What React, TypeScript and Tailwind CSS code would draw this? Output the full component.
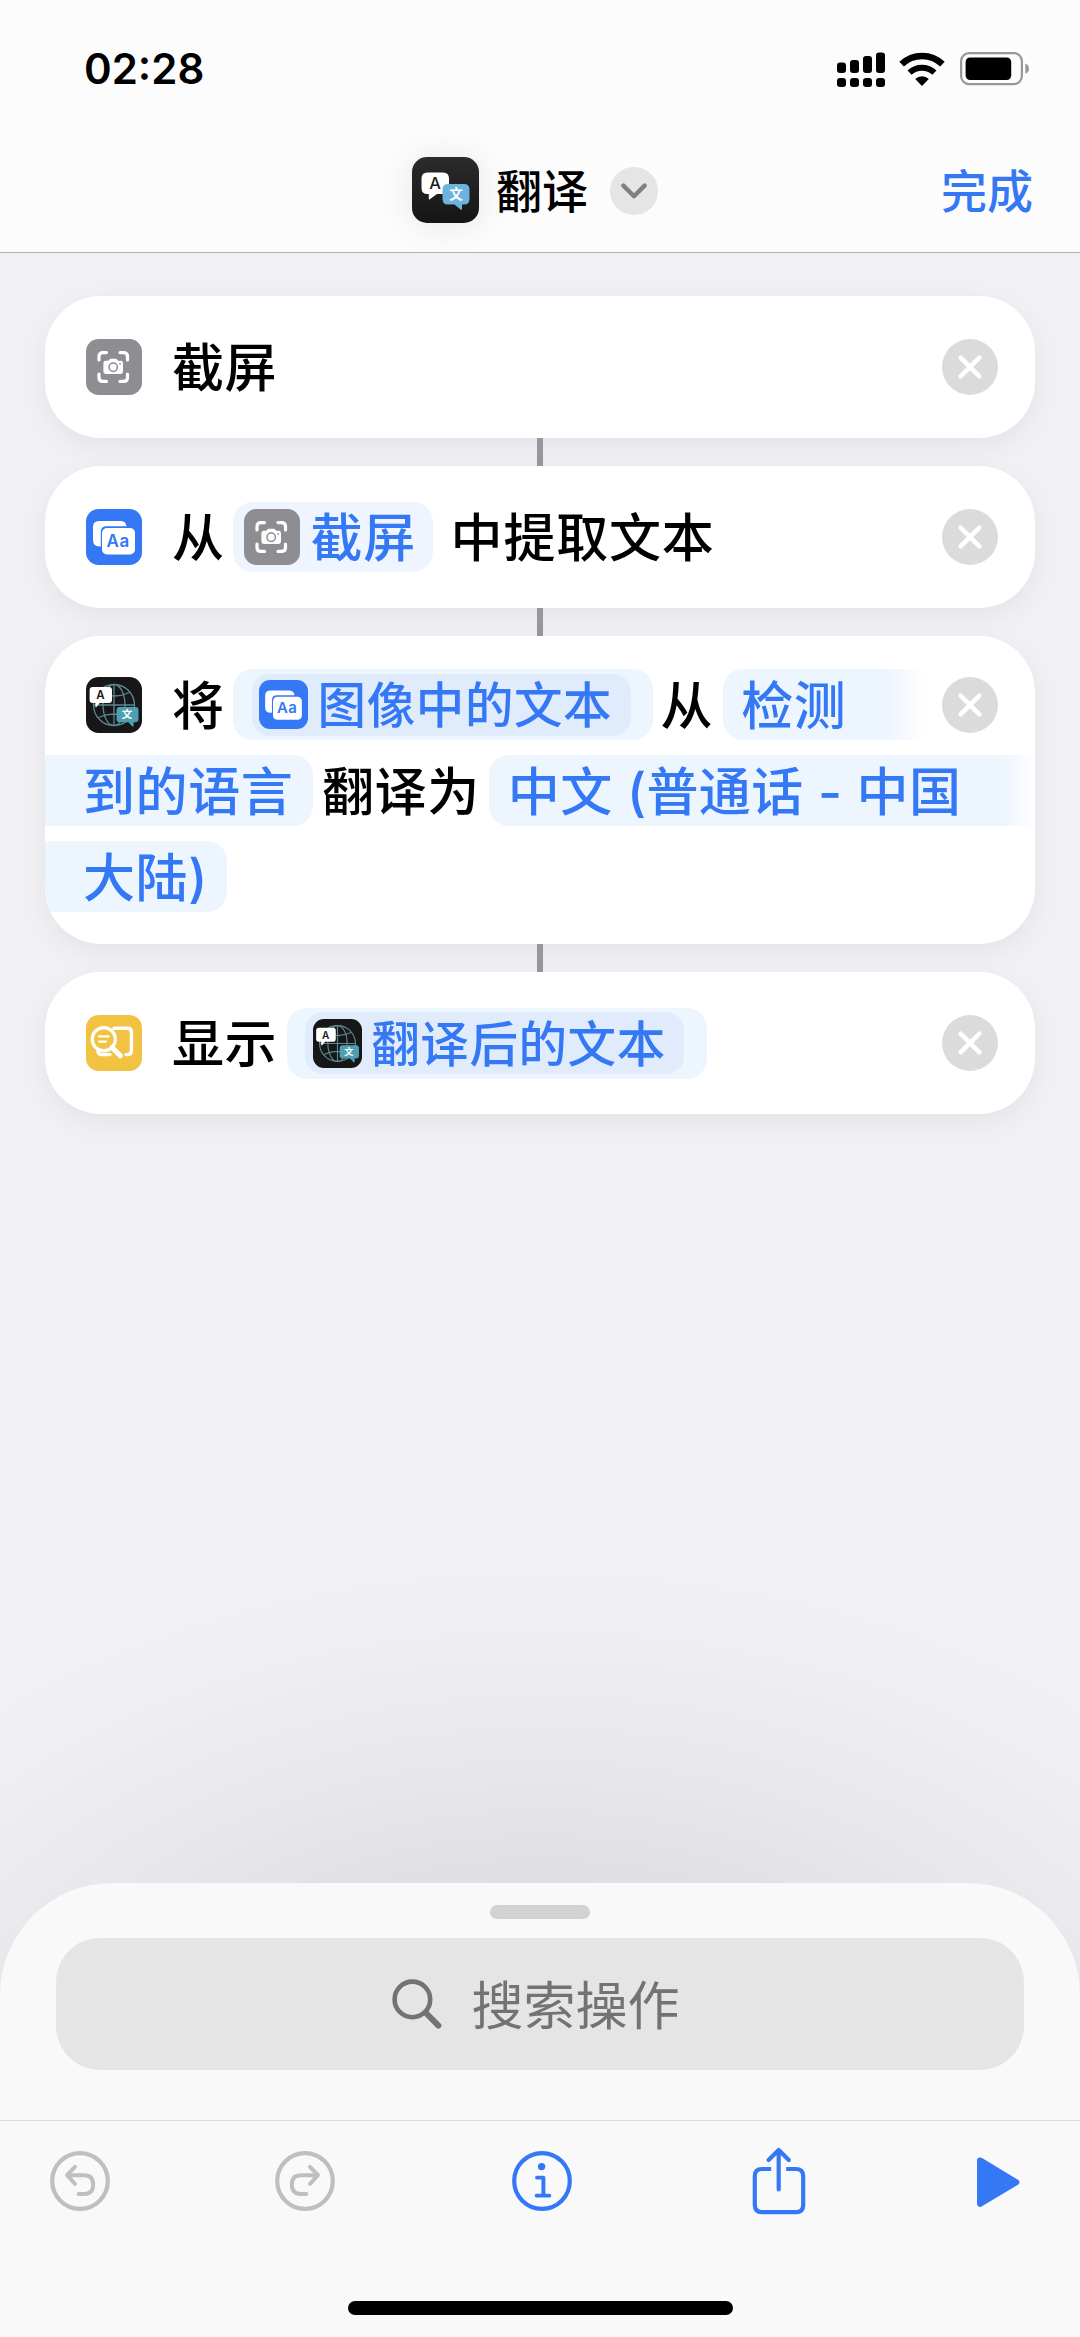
import type { ReactNode } from "react";

type IconProps = { className?: string };

const SignalIcon = () => (
  <svg className="h-[36px] w-[48px]" viewBox="0 0 48 36" fill="#000">
    <rect x="0" y="11.5" width="9" height="10.5" rx="3" />
    <rect x="13" y="9" width="9" height="13" rx="3" />
    <rect x="26" y="5" width="9" height="17" rx="3" />
    <rect x="39" y="1.5" width="9" height="20.5" rx="3" />
    <rect x="0" y="27" width="9" height="9" rx="3" />
    <rect x="13" y="27" width="9" height="9" rx="3" />
    <rect x="26" y="27" width="9" height="9" rx="3" />
    <rect x="39" y="27" width="9" height="9" rx="3" />
  </svg>
);

const WifiIcon = () => (
  <svg className="h-[34px] w-[46px]" viewBox="0 0 46 34" fill="none" stroke="#000">
    <path d="M2.6 12.2 A29.5 29.5 0 0 1 43.4 12.2" strokeWidth="6.6" />
    <path d="M10.6 20.7 A18 18 0 0 1 35.4 20.7" strokeWidth="6" />
    <path d="M23 34 L16.2 27 A9.6 9.6 0 0 1 29.8 27 Z" fill="#000" stroke="none" />
  </svg>
);

const BatteryIcon = () => (
  <svg className="h-[34px] w-[70px]" viewBox="0 0 70 34" fill="none">
    <rect x="1.1" y="1.1" width="60.8" height="31" rx="8" stroke="#97979a" strokeWidth="2.2" />
    <rect x="5.6" y="5.4" width="45.6" height="22.6" rx="4.5" fill="#000" />
    <path d="M65.3 11.6 C70.2 13 70.2 20.4 65.3 21.8 Z" fill="#97979a" />
  </svg>
);

const TranslateAppIcon = () => (
  <svg className="h-[66px] w-[67px] rounded-[15px] shadow-[0_2px_36px_rgba(0,0,0,0.09)]" viewBox="0 0 67 66">
    <defs>
      <linearGradient id="appBg" x1="0" y1="0" x2="0" y2="1">
        <stop offset="0" stopColor="#2b2b2b" />
        <stop offset="1" stopColor="#151515" />
      </linearGradient>
    </defs>
    <rect width="67" height="66" fill="url(#appBg)" />
    <path d="M15.5 15.5 H31 Q37 15.5 37 21.5 V31 Q37 37 31 37 H25 L17.5 42.5 Q16.8 42.6 16.8 41.8 V37 H15.5 Q9.5 37 9.5 31 V21.5 Q9.5 15.5 15.5 15.5 Z" fill="#fff" />
    <path d="M36 27 H52 Q57.5 27 57.5 32.5 V42 Q57.5 47.5 52 47.5 H50 V52.4 Q49.5 53.2 48.6 52.6 L42.5 47.5 H36 Q30.5 47.5 30.5 42 V32.5 Q30.5 27 36 27 Z" fill="#6ab4dd" />
    <text x="23" y="32.3" textAnchor="middle" fontSize="16.5" fontWeight="500" fill="#1c1c1c" fontFamily="Inter">A</text>
    <text x="44" y="42.4" textAnchor="middle" fontSize="13.5" fontWeight="700" fill="#fff" fontFamily="Noto Sans CJK SC">文</text>
  </svg>
);

const ScreenshotIcon = ({ className }: IconProps) => (
  <svg className={className} viewBox="0 0 56 56" fill="none">
    <rect width="56" height="56" rx="12.5" fill="#8e8d92" />
    <g stroke="#fff" strokeWidth="3.2" strokeLinecap="round">
      <path d="M13 21 V17.5 Q13 13.6 17 13.6 H20.5" />
      <path d="M34 13.6 H37.5 Q41.5 13.6 41.5 17.5 V21" />
      <path d="M41.5 35 V38.5 Q41.5 42.4 37.5 42.4 H34" />
      <path d="M20.5 42.4 H17 Q13 42.4 13 38.5 V35" />
    </g>
    <path d="M19.8 21.8 H22.4 L23.6 20.2 Q24 19.8 24.8 19.8 H29.8 Q30.6 19.8 31 20.2 L32.2 21.8 H34.6 Q37 21.8 37 24.2 V32.6 Q37 35 34.6 35 H19.8 Q17.4 35 17.4 32.6 V24.2 Q17.4 21.8 19.8 21.8 Z" fill="#fff" />
    <circle cx="27.2" cy="28.2" r="4.2" stroke="#8e8d92" strokeWidth="1.5" />
    <circle cx="34" cy="24.8" r="0.9" fill="#8e8d92" />
  </svg>
);

const ExtractTextIcon = ({ className }: IconProps) => (
  <svg className={className} viewBox="0 0 56 56">
    <rect width="56" height="56" rx="12.5" fill="#3478f6" />
    <path d="M13 12 H34 Q40 12 40.5 17.3 H20.5 Q14.8 17.3 14.8 23 V37.5 H13.5 Q7 37.5 7 31 V18 Q7 12 13 12 Z" fill="#fff" />
    <rect x="16" y="19" width="33" height="26.5" rx="5" fill="#fff" />
    <text x="32.2" y="38" textAnchor="middle" fontSize="17" fontWeight="600" fill="#3478f6" fontFamily="Inter">Aa</text>
  </svg>
);

const TranslateTextIcon = ({ className }: IconProps) => (
  <svg className={className} viewBox="0 0 56 56" fill="none">
    <rect width="56" height="56" rx="12.5" fill="#171717" />
    <g stroke="#5c8791" strokeWidth="1.3">
      <circle cx="28" cy="28" r="20.5" />
      <ellipse cx="28" cy="28" rx="11" ry="20.5" />
      <path d="M28 7.5 V48.5 M7.5 28 H48.5 M12.5 15.5 Q28 22.5 43.5 15.5 M12.5 40.5 Q28 33.5 43.5 40.5" />
    </g>
    <path d="M6.8 10 H22.8 Q26 10 26 13.2 V22.8 Q26 26 22.8 26 H13.8 L10.4 30 Q9.4 30.6 9.4 29.4 V26 H6.8 Q3.6 26 3.6 22.8 V13.2 Q3.6 10 6.8 10 Z" fill="#fff" />
    <path d="M33.7 30 H49.3 Q52.5 30 52.5 33.2 V42 Q52.5 45.2 49.3 45.2 H47.6 V49 Q47 50 46 49.2 L42.4 45.2 H33.7 Q30.5 45.2 30.5 42 V33.2 Q30.5 30 33.7 30 Z" fill="#4f9fb3" />
    <text x="14.8" y="22.4" textAnchor="middle" fontSize="11.5" fontWeight="600" fill="#171717" fontFamily="Inter">A</text>
    <text x="41.3" y="41.4" textAnchor="middle" fontSize="10.5" fontWeight="700" fill="#fff" fontFamily="Noto Sans CJK SC">文</text>
  </svg>
);

const ShowResultIcon = ({ className }: IconProps) => (
  <svg className={className} viewBox="0 0 56 56" fill="none" stroke="#fff" strokeLinecap="round">
    <rect width="56" height="56" rx="12.5" fill="#f2c343" stroke="none" />
    <path d="M28 13.2 H41.5 Q45.4 13.2 45.4 17.2 V35.8 Q45.4 39.6 41.5 39.6 H40" strokeWidth="3.4" />
    <path d="M24 39.6 H16 Q12 39.6 12 36" strokeWidth="3.4" />
    <circle cx="17.8" cy="24.2" r="11.6" strokeWidth="3.2" />
    <path d="M13 21.4 H22.6 M13 26.6 H19.8" strokeWidth="2.2" />
    <path d="M26 32.4 L34.4 40.8" strokeWidth="5" />
  </svg>
);

const DeleteButton = () => (
  <button className="h-14 w-14 shrink-0">
    <svg className="h-full w-full" viewBox="0 0 56 56">
      <circle cx="28" cy="28" r="28" fill="#dbdbdb" />
      <path d="M18.6 18.6 L37.4 37.4 M37.4 18.6 L18.6 37.4" stroke="#fff" strokeWidth="4.4" strokeLinecap="round" />
    </svg>
  </button>
);

const Card = ({ children }: { children: ReactNode }) => (
  <div className="w-full overflow-hidden rounded-[56px] bg-white shadow-[0_8px_28px_rgba(0,0,0,0.055)]">{children}</div>
);

const Connector = () => <div className="h-7 w-1.5 bg-[#97989e]" />;

const Toolbar = () => (
  <div className="flex h-[120px] items-center pl-[50px]">
    <svg className="h-[60px] w-[60px]" viewBox="0 0 60 60" fill="none" stroke="#bfbfbf" strokeWidth="4.2" strokeLinecap="round" strokeLinejoin="round">
      <circle cx="30" cy="30" r="27.8" />
      <path d="M25 15.8 L17 24.2 L25 32.8 M17.6 24.2 H34 Q43.2 24.2 43.2 33.6 Q43.2 43 34 43 H28.6" strokeWidth="3.9" />
    </svg>
    <svg className="ml-[165px] h-[60px] w-[60px]" viewBox="0 0 60 60" fill="none" stroke="#bfbfbf" strokeWidth="4.2" strokeLinecap="round" strokeLinejoin="round">
      <circle cx="30" cy="30" r="27.8" />
      <path d="M35 15.8 L43 24.2 L35 32.8 M42.4 24.2 H26 Q16.8 24.2 16.8 33.6 Q16.8 43 26 43 H31.4" strokeWidth="3.9" />
    </svg>
    <svg className="ml-[177px] h-[60px] w-[60px]" viewBox="0 0 60 60" fill="none" stroke="#3478f6" strokeWidth="4.2" strokeLinecap="round" strokeLinejoin="round">
      <circle cx="30" cy="30" r="27.8" />
      <circle cx="29.6" cy="15.6" r="3.7" fill="#3478f6" stroke="none" />
      <path d="M25 26.6 H31.4 V44.6 M24.6 44.6 H37.4" strokeWidth="3.9" />
    </svg>
    <svg className="ml-[180px] h-[68px] w-[54px]" viewBox="0 0 54 68" fill="none" stroke="#3478f6" strokeWidth="4.2" strokeLinecap="round" strokeLinejoin="round">
      <path d="M19.2 22 H10 Q2.8 22 2.8 29 V58 Q2.8 65.2 10 65.2 H44 Q51.2 65.2 51.2 58 V29 Q51.2 22 44 22 H34.2" strokeLinecap="butt" />
      <path d="M26.7 3.4 V42.4 M16.6 13 L26.7 3 L36.8 13" />
    </svg>
    <svg className="ml-[170px] mt-[2px] h-[52px] w-[44px]" viewBox="0 0 44 52">
      <path d="M4 4.4 L40.4 26.2 L4 47.8 Z" fill="#3478f6" stroke="#3478f6" strokeWidth="6" strokeLinejoin="round" />
    </svg>
  </div>
);

export default function App() {
  return (
    <div
      lang="zh-CN"
      className="flex h-[2337px] w-[1080px] flex-col overflow-hidden bg-[#f0f0f5] bg-[radial-gradient(ellipse_900px_640px_at_540px_2180px,rgba(0,0,0,0.08)_40%,rgba(0,0,0,0.07)_48%,rgba(0,0,0,0.042)_62%,rgba(0,0,0,0.018)_78%,rgba(0,0,0,0.005)_90%,transparent_100%)] font-['Inter','Noto_Sans_CJK_SC',sans-serif] text-black"
    >
      <header className="h-[253px] shrink-0 border-b border-[#b4b3b8] bg-[#fcfcfd]">
        <div className="flex h-[138px] items-center justify-between pl-[84px] pr-[50px]">
          <span className="text-[42px] font-semibold leading-none">02:28</span>
          <div className="flex items-center">
            <SignalIcon />
            <span className="w-[14px]" />
            <WifiIcon />
            <span className="w-[15px]" />
            <BatteryIcon />
          </div>
        </div>
        <div className="flex h-[104px] items-center pl-[412px] pr-[47px]">
          <TranslateAppIcon />
          <h1 className="ml-[17px] pt-px text-[46px] font-medium leading-none">翻译</h1>
          <button className="ml-[22px] mt-[2px] flex h-12 w-12 items-center justify-center rounded-full bg-[#e5e5e6]">
            <svg className="h-4 w-[26px]" viewBox="0 0 26 16" fill="none">
              <path d="M2.4 2.6 L13 13.2 L23.6 2.6" stroke="#808083" strokeWidth="4.4" strokeLinecap="round" strokeLinejoin="round" />
            </svg>
          </button>
          <button className="ml-auto pt-px text-[46px] font-medium leading-none text-[#3478f6]">完成</button>
        </div>
      </header>

      <main className="flex flex-1 flex-col items-center px-[45px] pt-[43px] text-[52px] font-medium leading-none tracking-[0.6px]">
        <Card>
          <div className="flex h-[142px] items-center pl-[41px] pr-[37px]">
            <ScreenshotIcon className="h-14 w-14" />
            <span className="ml-[30px] pt-1">截屏</span>
            <span className="flex-1" />
            <DeleteButton />
          </div>
        </Card>
        <Connector />
        <Card>
          <div className="flex h-[142px] items-center pl-[41px] pr-[37px]">
            <ExtractTextIcon className="h-14 w-14" />
            <span className="ml-[30px] pt-1">从</span>
            <span className="ml-[8px] flex h-[70px] w-[200px] items-center rounded-[20px] bg-[#eff5ff] pl-[11px] text-[#3478f6]">
              <ScreenshotIcon className="h-14 w-14" />
              <span className="ml-[11px] pt-1">截屏</span>
            </span>
            <span className="ml-[18px] pt-1 tracking-[0.8px]">中提取文本</span>
            <span className="flex-1" />
            <DeleteButton />
          </div>
        </Card>
        <Connector />
        <Card>
          <div className="flex flex-col gap-[15px] pb-8 pt-[33px]">
            <div className="flex h-[71px] items-center pl-[41px] pr-[37px]">
              <TranslateTextIcon className="h-14 w-14" />
              <span className="ml-[30px] pt-1">将</span>
              <span className="ml-[8px] flex h-[71px] w-[420px] items-center rounded-[20px] bg-[#edf5fe] pl-[19px]">
                <span className="flex h-[62px] w-[379px] items-center rounded-[18px] bg-[#e0ebfc] pl-[7px] text-[48.5px] text-[#3478f6]">
                  <ExtractTextIcon className="h-[49px] w-[49px]" />
                  <span className="ml-[10px] pt-1">图像中的文本</span>
                </span>
              </span>
              <span className="ml-[8px] pt-1">从</span>
              <span className="ml-[10px] flex h-[71px] w-[203px] items-center rounded-l-[20px] bg-linear-to-r from-[#edf5fe] from-80% to-white pl-[18px] text-[#3478f6]">
                <span className="pt-1">检测</span>
              </span>
              <span className="flex-1" />
              <DeleteButton />
            </div>
            <div className="flex h-[71px] items-center">
              <span className="flex h-full w-[268px] items-center rounded-r-[20px] bg-[#edf5fe] pl-[38px] text-[#3478f6]">
                <span className="pt-1">到的语言</span>
              </span>
              <span className="ml-[9px] pt-1">翻译为</span>
              <span className="ml-[9px] flex h-full flex-1 items-center rounded-l-[20px] bg-linear-to-r from-[#edf5fe] from-94% to-white pl-[19px] text-[#3478f6]">
                <span className="whitespace-pre pt-1 tracking-[0.4px]">中文 (普通话 - 中国</span>
              </span>
            </div>
            <div className="flex h-[71px] items-center">
              <span className="flex h-full w-[182px] items-center rounded-r-[20px] bg-[#edf5fe] pl-[38px] text-[#3478f6]">
                <span className="pt-1">大陆)</span>
              </span>
            </div>
          </div>
        </Card>
        <Connector />
        <Card>
          <div className="flex h-[142px] items-center pl-[41px] pr-[37px]">
            <ShowResultIcon className="h-14 w-14" />
            <span className="ml-[30px] pt-1">显示</span>
            <span className="ml-[10px] flex h-[71px] w-[420px] items-center rounded-[20px] bg-[#edf5fe] pl-[18px]">
              <span className="flex h-[62px] w-[379px] items-center rounded-[18px] bg-[#e0ebfc] pl-[8px] text-[48.5px] text-[#3478f6]">
                <TranslateTextIcon className="h-[49px] w-[49px]" />
                <span className="ml-[9px] pt-1">翻译后的文本</span>
              </span>
            </span>
            <span className="flex-1" />
            <DeleteButton />
          </div>
        </Card>
      </main>

      <footer className="flex h-[454px] shrink-0 flex-col rounded-t-[112px] bg-[#f9f9fa]">
        <div className="flex h-[238px] flex-col items-center border-b border-[#dcdcdf] px-14 pt-[22px]">
          <div className="h-[14px] w-[100px] rounded-full bg-[#d2d2d3]" />
          <div className="mt-[19px] flex h-[132px] w-full items-center justify-center rounded-[44px] bg-[#e5e5e6] pr-2 text-[#737375]">
            <svg className="h-[50px] w-[50px]" viewBox="0 0 50 50" fill="none" stroke="currentColor">
              <circle cx="20.4" cy="20.4" r="17.8" strokeWidth="4.6" />
              <path d="M34 34 L46.4 46.6" strokeWidth="6" strokeLinecap="round" />
            </svg>
            <span className="ml-[29px] pt-[5px] text-[52px] leading-none">搜索操作</span>
          </div>
        </div>
        <Toolbar />
        <div className="mx-auto mt-[60px] h-[14px] w-[385px] rounded-full bg-black" />
      </footer>
    </div>
  );
}
